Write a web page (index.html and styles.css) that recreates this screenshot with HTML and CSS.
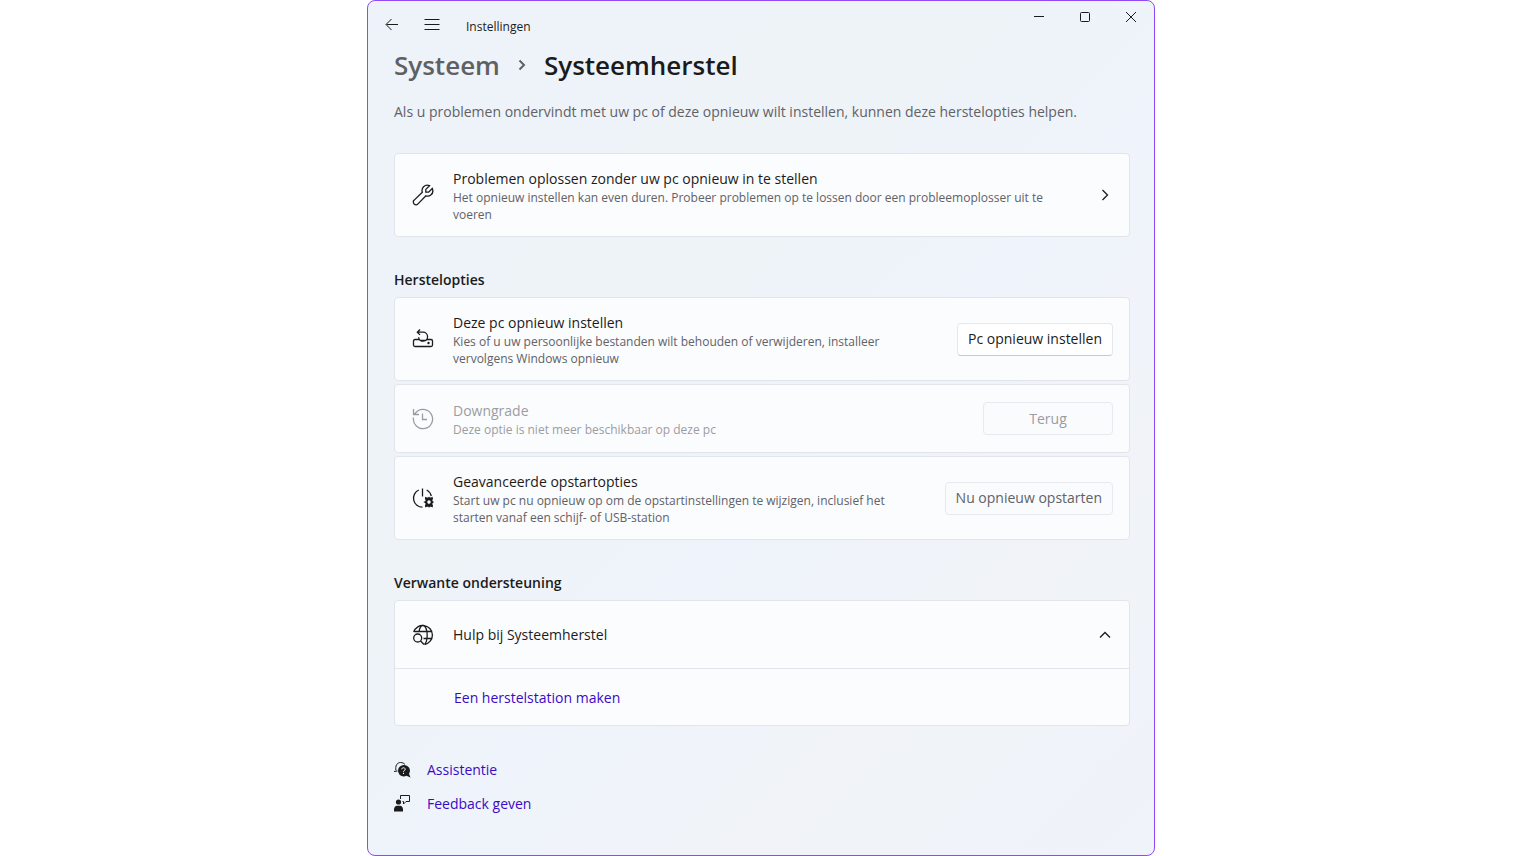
FILE: index.html
```html
<!DOCTYPE html>
<html lang="nl">
<head>
    <meta charset="UTF-8">
    <meta name="viewport" content="width=device-width, initial-scale=1.0">
    <title>Instellingen</title>
    <link rel="stylesheet" href="styles.css">
</head>
<body>
    <div class="window">
        <header class="titlebar">
            <button class="nav-button" aria-label="Vorige">
                <svg width="14" height="14" viewBox="0 0 14 14"><path d="M13 6.500H1.500M6.500 1L1 6.500 6.500 12"/></svg>
            </button>
            <button class="nav-button" aria-label="Menu">
                <svg width="16" height="14" viewBox="0 0 16 14"><path d="M0.500 1.500h15M0.500 6.500h15M0.500 11.500h15"/></svg>
            </button>
            <span class="app-name">Instellingen</span>
            <div class="window-controls">
                <button aria-label="Minimaliseren">
                    <svg width="12" height="12" viewBox="0 0 12 12"><path d="M1 5.500h10"/></svg>
                </button>
                <button aria-label="Maximaliseren">
                    <svg width="12" height="12" viewBox="0 0 12 12"><rect x="1.500" y="1.500" width="9" height="9" rx="1"/></svg>
                </button>
                <button aria-label="Sluiten">
                    <svg width="12" height="12" viewBox="0 0 12 12"><path d="M1 1l10 10M11 1L1 11"/></svg>
                </button>
            </div>
        </header>

        <main>
            <h1 class="breadcrumb">
                <a href="#">Systeem</a>
                <svg width="8" height="12" viewBox="0 0 8 12"><path d="M1.500 1.500L6 6l-4.500 4.500"/></svg>
                <span>Systeemherstel</span>
            </h1>
            <p class="intro">Als u problemen ondervindt met uw pc of deze opnieuw wilt instellen, kunnen deze herstelopties helpen.</p>

            <a class="card" href="#">
                <svg class="card-icon" width="22" height="22" viewBox="0 0 22 22"><path d="M17.500 1.700L13.800 5.400v2.800h2.800l3.700-3.700c1.100 2.600.3 5.100-1.500 6.500-1.400 1.100-3.200 1.300-4.900.8L6 19.900c-1.100 1.100-2.800 1.100-3.900.1-1.100-1.100-1.100-2.800.1-3.900L10.300 8.200c-.6-2-.1-4.100 1.300-5.500 1.600-1.600 3.900-2 5.900-1z"/></svg>
                <div class="card-text">
                    <h3>Problemen oplossen zonder uw pc opnieuw in te stellen</h3>
                    <p>Het opnieuw instellen kan even duren. Probeer problemen op te lossen door een probleemoplosser uit te voeren</p>
                </div>
                <svg class="chevron" width="16" height="16" viewBox="0 0 16 16"><path d="M5.500 3l5 5-5 5"/></svg>
            </a>

            <section>
                <h2>Herstelopties</h2>
                <div class="card">
                    <svg class="card-icon" width="22" height="22" viewBox="0 0 22 22"><path d="M6.800 11.500H3q-1.500 0-1.500 1.500v4Q1.500 18.500 3 18.500h16q1.500 0 1.500-1.500v-4q0-1.500-1.500-1.500h-3.800M5.500 4.200H11a4.500 4.500 0 1 1-4.400 5M8 1.500L5.300 4.200 8 6.900M6.800 11.500l2 1h4.600l2-1"/><circle class="fill" cx="16.500" cy="15" r="1.200"/></svg>
                    <div class="card-text">
                        <h3>Deze pc opnieuw instellen</h3>
                        <p>Kies of u uw persoonlijke bestanden wilt behouden of verwijderen, installeer vervolgens Windows opnieuw</p>
                    </div>
                    <button class="button">Pc opnieuw instellen</button>
                </div>
                <div class="card disabled">
                    <svg class="card-icon" width="22" height="22" viewBox="0 0 22 22"><path d="M1.500 9.500A9.600 9.600 0 1 0 3.500 5L2 6.500M1.500 1v5.500H7M10.500 5.500v6H15"/></svg>
                    <div class="card-text">
                        <h3>Downgrade</h3>
                        <p>Deze optie is niet meer beschikbaar op deze pc</p>
                    </div>
                    <button class="button wide" disabled>Terug</button>
                </div>
                <div class="card">
                    <svg class="card-icon" width="22" height="22" viewBox="0 0 22 22"><path d="M10.500 1.500v8M6.800 3A9 9 0 0 0 10.500 20.200M14.700 3a9 9 0 0 1 4.600 6"/><path class="fill" fill-rule="evenodd" d="M13.300 9.800l1.700.6h1.300l.7-.9.900.9h1.100l1.600-.6.400 2.200-.8 1.200.6 1.100 1.200.8-1.200.8-.6 1.100.8 1.200-.4 2.200-1.600-.6h-1.100l-.9.900-.7-.9H15l-1.700.6-.4-2.200.8-1.200-.6-1.100-1.800-.8 1.800-.8.6-1.100-.8-1.200zM17 13.300a1.800 1.800 0 1 0 0 3.600 1.800 1.800 0 0 0 0-3.600z"/></svg>
                    <div class="card-text">
                        <h3>Geavanceerde opstartopties</h3>
                        <p>Start uw pc nu opnieuw op om de opstartinstellingen te wijzigen, inclusief het starten vanaf een schijf- of USB-station</p>
                    </div>
                    <button class="button pressed">Nu opnieuw opstarten</button>
                </div>
            </section>

            <section>
                <h2>Verwante ondersteuning</h2>
                <details class="expander" open>
                    <summary>
                        <svg class="card-icon" width="22" height="22" viewBox="0 0 22 22"><path d="M1.700 8a9.600 9.600 0 1 1 10.800 12.500M1.700 7.500h18.600M11.500 14.500h8.500M7 8c.5-4 2-6.500 4-6.500 2.500 0 4.200 4.500 4.200 9.500s-1.200 8-2.700 9.500"/><circle cx="5.700" cy="14" r="4"/><path d="M8.600 17l3.400 3.500"/></svg>
                        <span>Hulp bij Systeemherstel</span>
                        <svg class="chevron" width="16" height="16" viewBox="0 0 16 16"><path d="M3 10.500l5-5 5 5"/></svg>
                    </summary>
                    <div class="expander-body">
                        <a href="#">Een herstelstation maken</a>
                    </div>
                </details>
            </section>

            <footer class="help-links">
                <a href="#">
                    <svg width="18" height="18" viewBox="0 0 18 18"><path d="M2 9.500C1 5 3 1.500 6.500 1.500c2 0 3.500.8 4.500 2M0 10.500l3.500-.5"/><path class="fill" d="M9.500 4a5.700 5.700 0 1 0 3 10.700l4 1.800-1.500-3.800A5.700 5.700 0 0 0 9.500 4z"/><path class="mark" d="M7.800 8.300c0-2.200 3.400-2 3.400 0 0 1.300-1.700 1.200-1.700 2.500M9.500 11.800v1.200"/></svg>
                    <span>Assistentie</span>
                </a>
                <a href="#">
                    <svg width="18" height="18" viewBox="0 0 18 18"><circle class="fill" cx="4.500" cy="7" r="2.600"/><path class="fill" d="M0 16.500v-2c0-2.300 1.500-3.700 3-3.700h3c1.500 0 3 1.400 3 3.700v2z"/><path d="M6.500 4V.500h9v6h-3.500L9.500 9V6.500H8.500"/></svg>
                    <span>Feedback geven</span>
                </a>
            </footer>
        </main>
    </div>
</body>
</html>
```
FILE: styles.css
```css
* {
    box-sizing: border-box;
}

body {
    margin: 0;
    background-color: #fff;
    color: #1b1b1b;
    font-family: "Open Sans", "Noto Sans", sans-serif;
    font-size: 14px;
    line-height: 20px;
}

h1, h2, h3, p {
    margin: 0;
}

a {
    color: inherit;
    text-decoration: none;
}

button {
    font: inherit;
    color: inherit;
}

svg {
    flex-shrink: 0;
    fill: none;
    stroke: currentColor;
}

svg .fill {
    fill: currentColor;
    stroke: none;
}

svg .mark {
    stroke: #fff;
}

.window {
    max-width: 788px;
    min-height: 100vh;
    margin: 0 auto;
    border: 1px solid #8f4af5;
    border-radius: 8px;
    background: linear-gradient(135deg, #eef3fb 0%, #eef3f8 35%, #eff3fb 55%, #f1f3f8 75%, #eff3fa 100%);
}

.titlebar {
    display: flex;
    align-items: center;
    height: 48px;
    padding-left: 4px;
}

.titlebar button {
    display: flex;
    align-items: center;
    justify-content: center;
    padding: 0;
    border: none;
    background: none;
}

.nav-button {
    width: 40px;
    height: 36px;
}

.app-name {
    margin-left: 14px;
    padding-top: 4px;
    font-size: 12px;
}

.window-controls {
    display: flex;
    align-self: flex-start;
    margin-left: auto;
}

.window-controls button {
    width: 46px;
    height: 32px;
}

main {
    padding: 0 24px 24px 26px;
}

.breadcrumb {
    display: flex;
    align-items: center;
    gap: 18px;
    font-size: 26px;
    font-weight: 600;
    line-height: 32px;
}

.breadcrumb a {
    color: #5f6062;
}

.breadcrumb svg {
    stroke: #5f6062;
    stroke-width: 2;
}

.intro {
    margin: 21px 0 31px;
    color: #606266;
}

.card {
    display: flex;
    align-items: center;
    min-height: 69px;
    margin-bottom: 3px;
    padding: 14px 16px 14px 17px;
    border: 1px solid #e1e4ea;
    border-radius: 4px;
    background-color: #fbfcfe;
}

.card-icon {
    margin-right: 19px;
    stroke-width: 1.3;
}

.card-text {
    flex: 1;
    margin-right: 40px;
    padding-top: 1px;
}

.chevron {
    stroke-width: 1.3;
}

h3 {
    font-size: 14px;
    font-weight: 400;
}

.card p {
    margin-bottom: -1px;
    color: #606266;
    font-size: 12px;
    line-height: 17px;
}

.disabled, .card.disabled p {
    color: #9b9c9f;
}

.button {
    height: 33px;
    padding: 0 10px;
    border: 1px solid #e6e7ea;
    border-bottom-color: #c9cacd;
    border-radius: 4px;
    background-color: #fff;
}

.button.wide {
    width: 130px;
}

.button:disabled, .button.pressed {
    border-color: #e8e9ec;
    background-color: #fafbfd;
}

.button.pressed {
    color: #606266;
}

h2 {
    padding: 30px 0 7px;
    font-size: 14px;
    font-weight: 600;
}

.expander {
    border: 1px solid #e1e4ea;
    border-radius: 4px;
    background-color: #fbfcfe;
}

.expander summary {
    display: flex;
    align-items: center;
    height: 67px;
    padding: 0 16px 0 17px;
    list-style: none;
}

.expander .chevron {
    margin-left: auto;
}

.expander-body {
    padding: 19px 59px 17px;
    border-top: 1px solid #e1e4ea;
}

.expander-body a,
.help-links span {
    color: #3a0bc4;
}

.help-links {
    display: flex;
    flex-direction: column;
    align-items: flex-start;
    gap: 14px;
    margin-top: 34px;
}

.help-links a {
    display: flex;
    align-items: center;
    gap: 15px;
}
```
